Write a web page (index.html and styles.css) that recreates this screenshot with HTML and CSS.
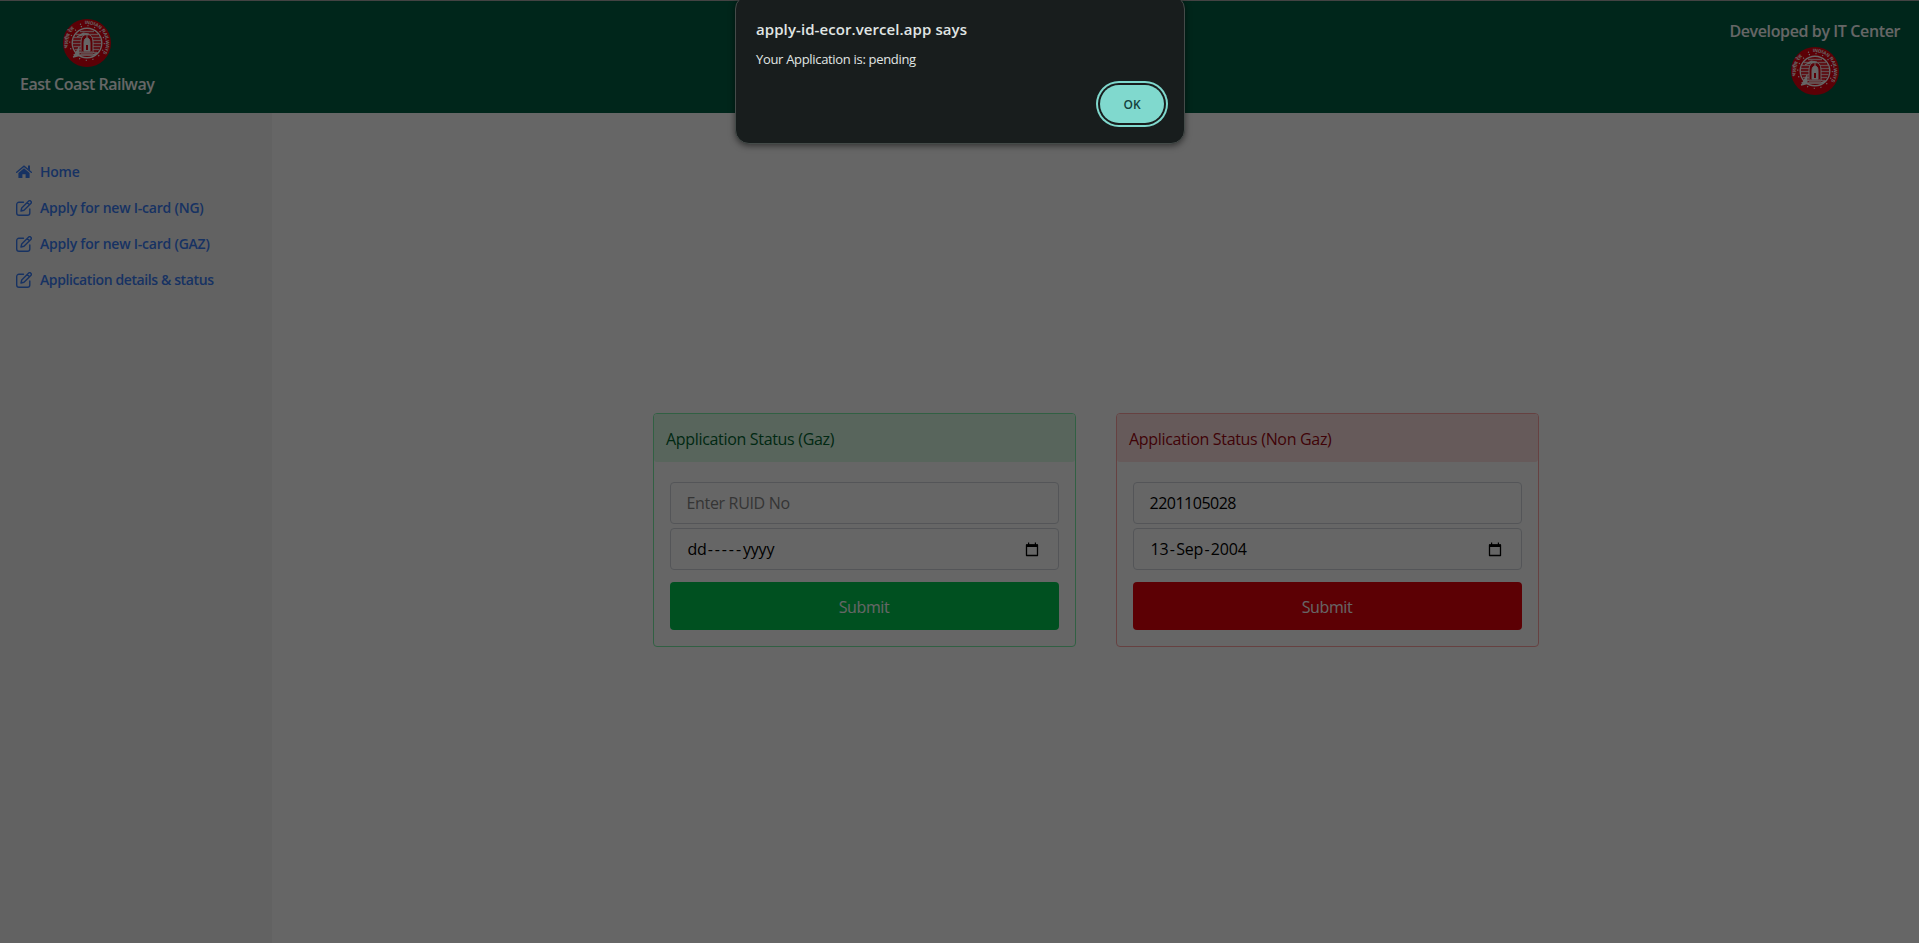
FILE: index.html
```html
<!DOCTYPE html>
<html lang="en">
<head>
<meta charset="utf-8">
<title>East Coast Railway</title>
<link rel="stylesheet" href="styles.css">
</head>
<body>
<svg width="0" height="0" class="defs">
  <defs>
    <symbol id="logo" viewBox="0 0 48 48">
      <circle cx="24" cy="24" r="24" fill="#e7000f"/>
      <circle cx="24" cy="24" r="17.300" fill="none" stroke="#fff" stroke-width="1.200" stroke-dasharray="1.200 5.590"/>
      <circle cx="24" cy="24" r="14.800" fill="#e7000f" stroke="#fff" stroke-width="1.400"/>
      <path d="M13 15.500h22M11 18.500h26M10 21.500h28M10 24.500h28M10.500 27.500h27M12 30.500h24M14 33.500h20M17 12.500h14" stroke="#fff" stroke-opacity=".75" stroke-width="1.700"/>
      <path d="M18 34V23q0-7.500 6-7.500t6 7.500v11z" fill="#e7000f" stroke="#fff" stroke-width="1"/>
      <path d="M21 24q0-5 3-5t3 5v8h-6zM19 33h10M24 16v5M11 37l5-9v8zM14 18l6-4 6 1" fill="#fff" stroke="#fff" stroke-width="1"/>
      <path d="M23 26h2v5h-2z" fill="#e7000f"/>
      <path d="M10 38l8-2h12l5-2" fill="none" stroke="#fff" stroke-width="1.500"/>
      <circle cx="17.500" cy="5.200" r=".7" fill="#fff"/>
    </symbol>
    <path id="ring-left" d="M5.600 28.900A19 19 0 0 1 14.500 7.500"/>
    <path id="ring-right" d="M22 5.100A19 19 0 0 1 37.400 37.400"/>
    <symbol id="edit" viewBox="0 0 16 16">
      <path d="M7.500 2.200H3A2.300 2.300 0 0 0 .7 4.500V13A2.300 2.300 0 0 0 3 15.300h8.500a2.300 2.300 0 0 0 2.300-2.300V9" fill="none" stroke="currentColor" stroke-width="1.400" stroke-linecap="round"/>
      <path d="M5 11l.7-3L12.500 1.200a1.600 1.600 0 0 1 2.300 2.300L8 10.300zM11.200 2.500l2.300 2.300" fill="none" stroke="currentColor" stroke-width="1.400" stroke-linejoin="round"/>
    </symbol>
    <symbol id="home" viewBox="0 0 16 16">
      <path d="M.7 8.300L8 2.200l7.300 6.100" fill="none" stroke="currentColor" stroke-width="1.400" stroke-linecap="round"/>
      <path d="M12 1.600h2v4.800l-2-1.700zM8 4.300l5.600 4.600v4.600a.5.500 0 0 1-.5.500H9.600v-3.800H6.400V14H2.900a.5.500 0 0 1-.5-.5V8.900z" fill="currentColor"/>
    </symbol>
    <symbol id="cal" viewBox="0 0 14 15">
      <path d="M1.500 3h11v10.500h-11z" fill="none" stroke="#000" stroke-width="1.300" stroke-linejoin="round"/>
      <path d="M1 2.500h12V5H1zM3 .5h1.200V3H3zM9.800.5H11V3H9.800z" fill="#000"/>
    </symbol>
  </defs>
</svg>
<div class="page">
  <header class="header">
    <div class="brand">
      <svg class="logo" viewBox="0 0 48 48"><use href="#logo"/><text class="seal hindi"><textPath href="#ring-left">भारतीय रेल</textPath></text><text class="seal"><textPath href="#ring-right">INDIAN RAILWAYS</textPath></text></svg>
      <span class="title t-brand">East Coast Railway</span>
    </div>
    <div class="credit">
      <span class="title t-credit">Developed by IT Center</span>
      <svg class="logo" viewBox="0 0 48 48"><use href="#logo"/><text class="seal hindi"><textPath href="#ring-left">भारतीय रेल</textPath></text><text class="seal"><textPath href="#ring-right">INDIAN RAILWAYS</textPath></text></svg>
    </div>
  </header>
  <div class="body">
    <nav class="sidebar">
      <a class="link"><svg class="icon"><use href="#home"/></svg><span>Home</span></a>
      <a class="link"><svg class="icon"><use href="#edit"/></svg><span>Apply for new I-card (NG)</span></a>
      <a class="link"><svg class="icon"><use href="#edit"/></svg><span>Apply for new I-card (GAZ)</span></a>
      <a class="link tight"><svg class="icon"><use href="#edit"/></svg><span>Application details &amp; status</span></a>
    </nav>
    <main class="main">
      <section class="card green">
        <h2 class="card-head">Application Status (Gaz)</h2>
        <div class="form">
          <div class="field hint"><span class="f-hint">Enter RUID No</span></div>
          <div class="field date"><span class="f-empty">dd<span class="dashes">-----</span>yyyy</span><svg class="cal"><use href="#cal"/></svg></div>
          <div class="submit">Submit</div>
        </div>
      </section>
      <section class="card red">
        <h2 class="card-head">Application Status (Non Gaz)</h2>
        <div class="form">
          <div class="field"><span class="f-num">2201105028</span></div>
          <div class="field date"><span class="f-date">13<span class="dash">-</span>Sep<span class="dash">-</span>2004</span><svg class="cal"><use href="#cal"/></svg></div>
          <div class="submit">Submit</div>
        </div>
      </section>
    </main>
  </div>
</div>
<div class="overlay"></div>
<div class="dialog">
  <div class="dialog-title">apply-id-ecor.vercel.app says</div>
  <div class="dialog-text">Your Application is: pending</div>
  <div class="ok">OK</div>
</div>
</body>
</html>
```

FILE: styles.css
```css
* { box-sizing: border-box; }
body { margin: 0; height: 943px; overflow: hidden; background: #fff; font-family: "Open Sans", "Noto Sans", sans-serif; font-size: 16px; line-height: 24px; }
.defs { position: absolute; }
.page { height: 943px; display: flex; flex-direction: column; border-top: 1px solid #a8a8a8; }
.header { height: 112px; background: #006045; color: #fff; display: flex; justify-content: space-between; padding: 18px 19px 0 20px; }
.brand, .credit { display: flex; flex-direction: column; align-items: center; }
.title { font-weight: 600; font-size: 16px; white-space: nowrap; }
.brand .title { margin-top: 5px; }
.credit .logo { margin-top: 4px; }
.t-brand { letter-spacing: -.5px; }
.t-credit { letter-spacing: -.38px; }
.logo { width: 48px; height: 48px; display: block; overflow: visible; }
.seal { font: 700 4.8px "Liberation Sans", sans-serif; fill: #fff; }
.hindi { font-size: 5px; }
.body { flex: 1; display: flex; }
.sidebar { width: 272px; background: #f5f5f6; padding: 49px 16px; display: flex; flex-direction: column; gap: 16px; color: #3b7df6; }
.link { display: flex; align-items: center; gap: 8px; height: 20px; font-size: 14px; line-height: 20px; font-weight: 600; white-space: nowrap; letter-spacing: -.23px; }
.tight { letter-spacing: -.39px; }
.icon { width: 16px; height: 16px; }
.main { flex: 1; display: flex; justify-content: center; align-items: center; gap: 40px; padding-top: 4px; }
.card { width: 423px; height: 234px; border: 1px solid; border-radius: 4px; }
.card-head { margin: 0; height: 48px; padding: 0 12.5px; font-size: 16px; font-weight: 400; line-height: 50px; border-radius: 3px; letter-spacing: -.32px; }
.green { border-color: #7bf1a8; }
.green .card-head { background: #dcfce7; color: #016630; }
.green .submit { background: #00c951; }
.red { border-color: #ffa2a2; }
.red .card-head { background: #ffe2e2; color: #9f0712; }
.red .submit { background: #e7000b; }
.form { padding: 20px 16px 0; }
.field { height: 42px; border: 1px solid #d1d5dc; border-radius: 4px; margin-bottom: 4px; padding: 0 16px; display: flex; align-items: center; justify-content: space-between; }
.hint { color: #858585; }
.f-hint { letter-spacing: -.33px; }
.f-num { letter-spacing: -.5px; }
.date { padding-left: 17px; }
.f-empty, .f-date { letter-spacing: -.2px; }
.dashes { letter-spacing: 1.9px; margin-left: 1px; }
.dash { margin: 0 1.4px; }
.cal { width: 14px; height: 15px; margin-right: 3px; }
.submit { height: 48px; margin-top: 12px; border-radius: 4px; color: #fff; line-height: 50px; text-align: center; letter-spacing: -.4px; }
.overlay { position: absolute; inset: 0; background: rgba(0, 0, 0, .6); }
.dialog { position: absolute; left: 735px; top: -5px; width: 450px; height: 149px; border: 1px solid #444b49; border-radius: 14px; background: #181d1d; color: #e0e6e4; padding: 22px 20px 15px 20px; display: flex; flex-direction: column; box-shadow: 0 2px 6px rgba(0, 0, 0, .5); }
.dialog-title { font-size: 15px; font-weight: 600; line-height: 22px; letter-spacing: .08px; }
.dialog-text { font-size: 13px; line-height: 20px; margin-top: 9px; letter-spacing: -.32px; }
.ok { align-self: flex-end; margin-top: 16px; width: 64px; height: 38px; border-radius: 19px; background: #80d9ce; color: #14423d; font-size: 12px; font-weight: 600; line-height: 39px; text-align: center; box-shadow: 0 0 0 2px #181d1d, 0 0 0 4px #80d9ce; }
```
